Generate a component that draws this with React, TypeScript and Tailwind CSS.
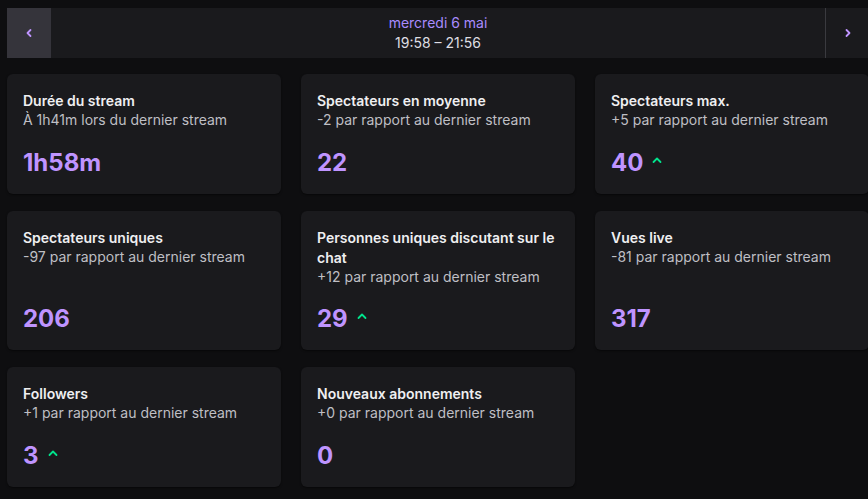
import React from "react";

type Stat = {
  title: string;
  diff: string;
  value: string;
  up?: boolean;
};

const stats: Stat[] = [
  { title: "Durée du stream", diff: "À 1h41m lors du dernier stream", value: "1h58m" },
  { title: "Spectateurs en moyenne", diff: "-2 par rapport au dernier stream", value: "22" },
  { title: "Spectateurs max.", diff: "+5 par rapport au dernier stream", value: "40", up: true },
  { title: "Spectateurs uniques", diff: "-97 par rapport au dernier stream", value: "206" },
  { title: "Personnes uniques discutant sur le chat", diff: "+12 par rapport au dernier stream", value: "29", up: true },
  { title: "Vues live", diff: "-81 par rapport au dernier stream", value: "317" },
  { title: "Followers", diff: "+1 par rapport au dernier stream", value: "3", up: true },
  { title: "Nouveaux abonnements", diff: "+0 par rapport au dernier stream", value: "0" },
];

const Caret = () => (
  <svg width="10" height="8" viewBox="0 0 10 8" className="ml-[9px] mb-[6px]">
    <polyline points="1.5,6 5,2.5 8.5,6" fill="none" stroke="#00e38c" strokeWidth="1.8" strokeLinecap="round" strokeLinejoin="round" />
  </svg>
);

const StatCard = ({ stat }: { stat: Stat }) => (
  <div className="flex flex-col rounded-md bg-[#1a1a1d] px-4 pt-4 pb-[15px] min-h-[120px] shadow-[0_1px_2px_rgba(0,0,0,0.5)]">
    <div className="text-sm font-semibold leading-5 text-[#efeff1] mt-px">{stat.title}</div>
    <div className="text-sm leading-5 text-[#bfbfc4] -mt-px">{stat.diff}</div>
    <div className="mt-auto pt-4 flex items-center">
      <span className="text-2xl font-bold leading-8 text-[#bf94ff]">{stat.value}</span>
      {stat.up && <Caret />}
    </div>
  </div>
);

const App = () => {
  return (
    <div
      className="h-[499px] w-[868px] overflow-hidden bg-[#0e0e10]"
      style={{ fontFamily: "Inter, 'Noto Sans', sans-serif" }}
    >
      <div className="w-[862px] ml-[7px] pt-2">
        {/* date navigation */}
        <div className="flex h-[50px] bg-[#1a1a1d]">
          <button className="flex w-[44px] items-center justify-center bg-[#35343b] text-[#bf94ff]">
            <svg width="8" height="10" viewBox="0 0 8 10">
              <polyline points="5.5,2 2.5,5 5.5,8" fill="none" stroke="currentColor" strokeWidth="1.8" strokeLinecap="round" strokeLinejoin="round" />
            </svg>
          </button>
          <div className="flex flex-1 flex-col items-center justify-center">
            <div className="text-sm leading-5 text-[#a98bff]">mercredi 6 mai</div>
            <div className="text-sm leading-5 text-[#dedee3]">19:58 – 21:56</div>
          </div>
          <button className="flex w-[44px] items-center justify-center border-l border-[#3a3a3f] text-[#bf94ff]">
            <svg width="8" height="10" viewBox="0 0 8 10">
              <polyline points="2.5,2 5.5,5 2.5,8" fill="none" stroke="currentColor" strokeWidth="1.8" strokeLinecap="round" strokeLinejoin="round" />
            </svg>
          </button>
        </div>

        {/* stats */}
        <div className="mt-4 grid grid-cols-3 gap-x-5 gap-y-[17px]">
          {stats.map((s) => (
            <StatCard key={s.title} stat={s} />
          ))}
        </div>
      </div>
    </div>
  );
};

export default App;
